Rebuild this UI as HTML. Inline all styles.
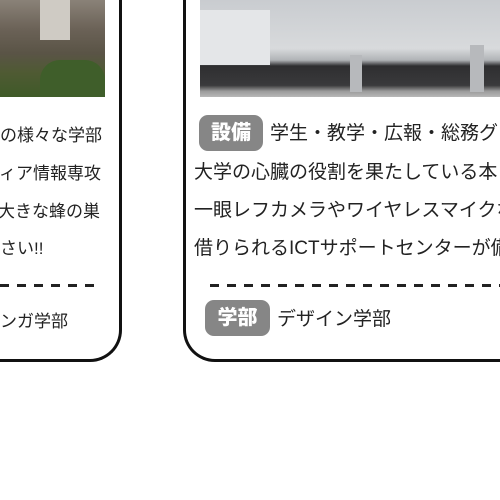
<!DOCTYPE html>
<html><head><meta charset="utf-8"><style>
html,body{margin:0;width:500px;height:500px;overflow:hidden}
body{background:#fff;font-family:"Liberation Sans","Noto Sans CJK JP",sans-serif;color:#222}
#w{position:relative;width:500px;height:500px;overflow:hidden}
.card{position:absolute;border:3px solid #111;border-top:none;background:#fff}
.t{position:absolute;white-space:nowrap;line-height:1}
.badge{position:absolute;background:#868686;color:#fff;font-weight:900;border-radius:9px;text-align:center;font-size:20px;line-height:36px}
.dash{position:absolute;height:3px;background:repeating-linear-gradient(90deg,#222 0 9px,transparent 9px 17px)}
</style></head><body><div id="w">
<div class="card" style="left:-40px;top:-10px;width:156px;height:369px;border-radius:0 0 32px 32px"></div>
<div class="card" style="left:183px;top:-10px;width:360px;height:369px;border-radius:0 0 32px 32px"></div>
<div style="position:absolute;left:0;top:0;width:105px;height:97px;background:linear-gradient(180deg,#8a8278 0%,#6b6257 30%,#5a5446 55%,#4f5a33 75%,#3f5a28 100%)"></div>
<div style="position:absolute;left:40px;top:0;width:30px;height:40px;background:#cfcbc4"></div>
<div style="position:absolute;left:40px;top:60px;width:65px;height:37px;background:#3f5e2a;border-radius:20px 20px 0 0"></div>
<div style="position:absolute;left:200px;top:0;width:300px;height:97px;background:linear-gradient(180deg,#c9ccd0 0%,#d8dadc 50%,#b0b3b6 62%,#2e2e30 68%,#3a3a3c 88%,#9a9a9a 94%,#b8b8b8 100%)"></div>
<div style="position:absolute;left:200px;top:10px;width:70px;height:55px;background:#e4e6e8"></div>
<div style="position:absolute;left:350px;top:55px;width:12px;height:37px;background:#b7b9bc"></div>
<div style="position:absolute;left:470px;top:45px;width:14px;height:47px;background:#b7b9bc"></div>
<div class="t" style="left:0;top:127px;font-size:17px">の様々な学部</div>
<div class="t" style="left:-1px;top:165px;font-size:17px">ィア情報専攻</div>
<div class="t" style="left:-2px;top:203px;font-size:17px">大きな蜂の巣</div>
<div class="t" style="left:0;top:240px;font-size:17px">さい!!</div>
<div class="dash" style="left:0;top:284px;width:100px"></div>
<div class="t" style="left:0;top:313px;font-size:17px">ンガ学部</div>
<div class="badge" style="left:199px;top:115px;width:64px;height:36px">設備</div>
<div class="t" style="left:270px;top:124px;font-size:19px">学生・教学・広報・総務グ</div>
<div class="t" style="left:194px;top:163px;font-size:19px">大学の心臓の役割を果たしている本</div>
<div class="t" style="left:194px;top:201px;font-size:19px">一眼レフカメラやワイヤレスマイクなど</div>
<div class="t" style="left:194px;top:239px;font-size:19px">借りられるICTサポートセンターが備</div>
<div class="dash" style="left:210px;top:284px;width:290px"></div>
<div class="badge" style="left:205px;top:300px;width:65px;height:36px">学部</div>
<div class="t" style="left:277px;top:310px;font-size:19px">デザイン学部</div>
</div></body></html>
